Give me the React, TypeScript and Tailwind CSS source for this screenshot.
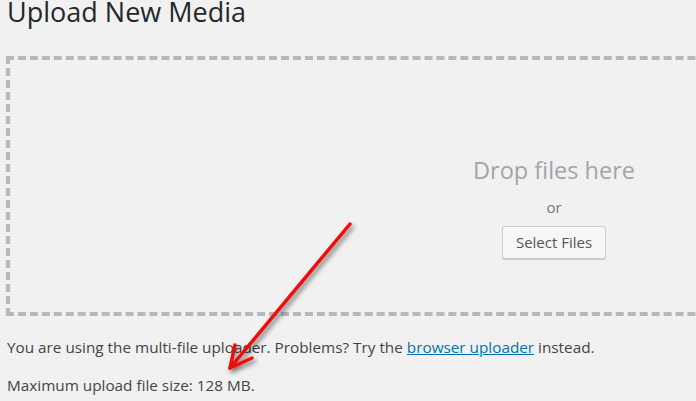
import React from 'react';

const font = { fontFamily: '"Open Sans", "Noto Sans", sans-serif' };

const Arrow: React.FC = () => (
    <svg className="absolute left-[220px] top-[215px]" width="145" height="165" viewBox="220 215 145 165">
        <defs>
            <filter id="shadow" x="-30%" y="-30%" width="160%" height="160%">
                <feDropShadow dx="2" dy="3" stdDeviation="2.5" floodColor="#000" floodOpacity="0.55" />
            </filter>
        </defs>
        <g filter="url(#shadow)" stroke="#ee1111" strokeWidth="3.5" strokeLinecap="round" fill="none">
            <path d="M350 224 L230 368" />
            <path d="M235 345 L230 368 L252 358" strokeLinejoin="round" />
        </g>
    </svg>
);

export default function App() {
    return (
        <div className="relative w-[696px] h-[401px] overflow-hidden bg-[#f1f1f1]" style={font}>
            <h1 className="pl-[7px] text-[27px] leading-[24px] text-[#23282d] font-normal">Upload New Media</h1>

            <div className="ml-[6px] mt-[32px] w-[1096px] h-[260px] border-4 border-dashed border-[#b4b9be] flex flex-col items-center pt-[95px]">
                <p className="text-[23.5px] leading-[30px] text-[#a0a5aa]">Drop files here</p>
                <p className="mt-[12px] text-[15px] leading-[20px] text-[#72777c]">or</p>
                <button className="mt-[9px] w-[104px] h-[33px] rounded-[3px] border border-[#cccccc] bg-[#f7f7f7] text-[15px] text-[#555555] shadow-[0_1px_0_#cccccc]">
                    Select Files
                </button>
            </div>

            <p className="pl-[7px] mt-[21px] text-[15.3px] leading-[20px] text-[#444444]">
                You are using the multi-file uploader. Problems? Try the{' '}
                <a href="#" className="text-[#0073aa] underline">browser uploader</a> instead.
            </p>
            <p className="pl-[7px] mt-[18px] text-[15.3px] leading-[20px] text-[#444444]">Maximum upload file size: 128 MB.</p>

            <Arrow />
        </div>
    );
}
